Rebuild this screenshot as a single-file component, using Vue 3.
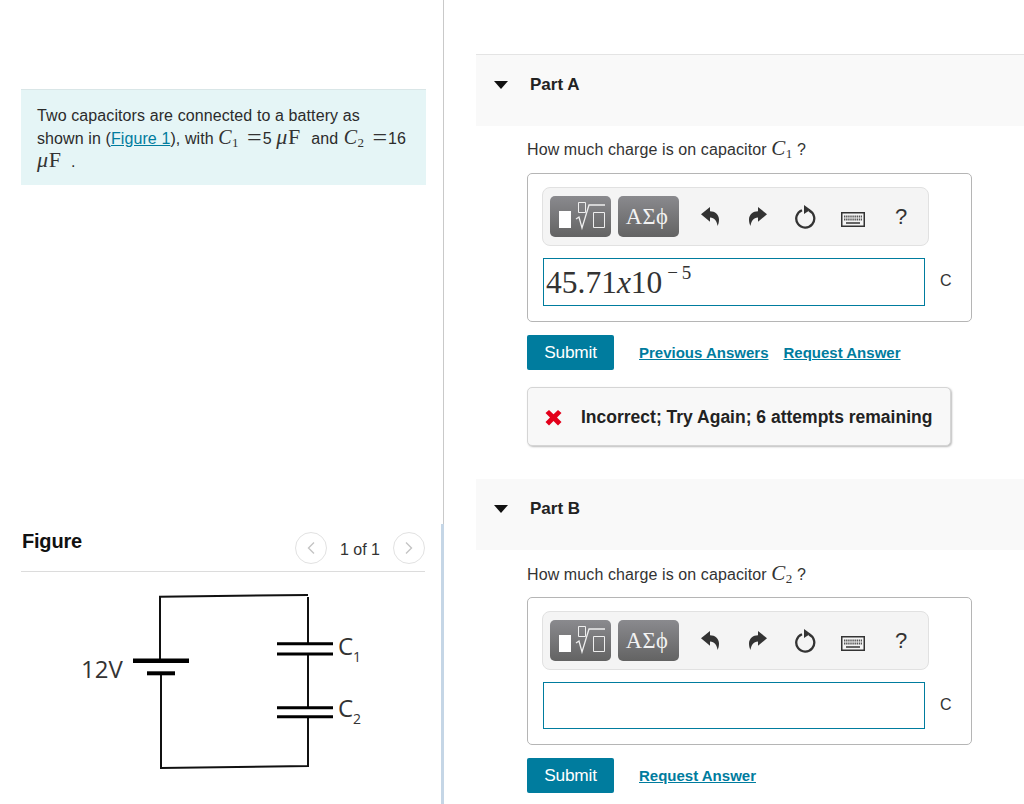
<script setup>
const parts = [
  {
    name: 'Part A',
    sub: '1',
    value: true,
    links: ['Previous Answers', 'Request Answer'],
    feedback: 'Incorrect; Try Again; 6 attempts remaining'
  },
  { name: 'Part B', sub: '2', value: false, links: ['Request Answer'], feedback: '' }
]
</script>

<template>
  <div class="page">
    <aside class="left">
      <div class="intro">
        <p>
          Two capacitors are connected to a battery as<br />
          shown in (<a class="fig-link">Figure 1</a>), with
          <span class="m"><i>C</i><sub>1</sub></span><span class="m eq">=</span>5 <span class="m mu"><i>μ</i>F</span>
          &nbsp;<span class="and">and</span> <span class="m c2"><i>C</i><sub>2</sub></span><span class="m eq">=</span>16<br />
          <span class="m mu"><i>μ</i>F</span> &nbsp;.
        </p>
      </div>
      <div class="fig-head">
        <h2>Figure</h2>
        <div class="pager">
          <span class="round">
            <svg width="10" height="14" viewBox="0 0 10 14"><path d="M8 1.500 2.500 7 8 12.500" fill="none" stroke="#c4c4c4" stroke-width="1.400" /></svg>
          </span>
          <span class="count">1 of 1</span>
          <span class="round">
            <svg width="10" height="14" viewBox="0 0 10 14"><path d="M2 1.500 7.500 7 2 12.500" fill="none" stroke="#c4c4c4" stroke-width="1.400" /></svg>
          </span>
        </div>
      </div>
      <svg class="circuit" width="404" height="190" viewBox="0 0 404 190">
        <g fill="none" stroke="#111" stroke-width="2">
          <path d="M139 72V8.700L287 7" />
          <path d="M287 9V56M287 66V120M287 129V178L140 180V85" />
        </g>
        <g fill="none" stroke="#000">
          <path d="M112 72.700H168" stroke-width="4.500" />
          <path d="M126 85.300H154" stroke-width="4" />
          <path d="M256 55.700H312M256 66H312M256 119.700H312M256 128.700H312" stroke-width="3" />
        </g>
        <text x="60" y="90" class="svg-label big">12V</text>
        <text x="317" y="67" class="svg-label big">C</text>
        <text x="332" y="74" class="svg-label small">1</text>
        <text x="317" y="129" class="svg-label big">C</text>
        <text x="332" y="136" class="svg-label small">2</text>
      </svg>
    </aside>

    <main class="right">
      <section v-for="p in parts" :key="p.name" class="part">
        <header class="part-head">
          <svg class="caret" width="14" height="8" viewBox="0 0 14 8"><path d="M0 0H14L7 8Z" fill="#111" /></svg>
          <span>{{ p.name }}</span>
        </header>
        <div class="part-body">
          <p class="question">
            How much charge is on capacitor
            <span class="m q"><i>C</i><sub>{{ p.sub }}</sub></span> ?
          </p>
          <div class="answer-box">
            <div class="toolbar">
              <button class="tool">
                <svg width="61" height="41" viewBox="0 0 61 41">
                  <rect x="9" y="15" width="12" height="17" fill="#fff" />
                  <path d="M28.500 6.500h7v10h-7z" fill="none" stroke="#eee" stroke-width="1" />
                  <path d="M26 23l3-2 3 11 7-23H55" fill="none" stroke="#eee" stroke-width="1.300" />
                  <path d="M43.500 16.500h11v15h-11z" fill="none" stroke="#eee" stroke-width="1" />
                </svg>
              </button>
              <button class="tool greek">ΑΣϕ</button>
              <span class="icons">
                <svg class="i-undo" width="18" height="20" viewBox="0 0 18 20"><path d="M0 8.300 9 1V5.200C14 5.200 18 8.500 18 13.500 18 16 17.500 18 16.500 20 16 15.500 13.500 11.500 9 11.500V15.700Z" fill="#333" /></svg>
                <svg class="i-redo" width="18" height="20" viewBox="0 0 18 20"><path d="M18 8.300 9 1V5.200C4 5.200 0 8.500 0 13.500 0 16 .5 18 1.500 20 2 15.500 4.500 11.500 9 11.500V15.700Z" fill="#333" /></svg>
                <svg class="i-reset" width="22" height="24" viewBox="0 0 22 24"><path d="M14 5.400A9 9 0 1 1 7 5.200" fill="none" stroke="#333" stroke-width="2.300" /><path d="M9 0 15.500 4.700 9 9Z" fill="#333" /></svg>
                <svg class="i-keys" width="24" height="15" viewBox="0 0 24 15">
                  <rect x=".75" y=".75" width="22.500" height="13.500" fill="#f4f4f4" stroke="#333" stroke-width="1.500" />
                  <path d="M3 4.500h18M3 7.500h18" stroke="#555" stroke-width="1.800" stroke-dasharray="1.400 .7" />
                  <path d="M5 11h14" stroke="#555" stroke-width="1.800" />
                </svg>
                <span class="help">?</span>
              </span>
            </div>
            <div class="input-row">
              <div class="math-input" :class="{ empty: !p.value }">
                <template v-if="p.value">45.71<i>x</i>10<sup><span class="minus">−</span> 5</sup></template>
              </div>
              <span class="unit">C</span>
            </div>
          </div>
          <div class="actions">
            <button class="submit">Submit</button>
            <a v-for="l in p.links" :key="l" class="action-link">{{ l }}</a>
          </div>
          <div v-if="p.feedback" class="feedback">
            <svg width="17" height="17" viewBox="0 0 17 17"><path d="M4 1 8.500 5.200 13 1 16.500 4 12 8.500 16.500 13 13 16.500 8.500 12 4 16.500 .5 13 5 8.500 .5 4Z" fill="#e3001b" /></svg>
            <span>{{ p.feedback }}</span>
          </div>
        </div>
      </section>
    </main>
  </div>
</template>

<style>
html, body { margin: 0; background: #fff; overflow: hidden; }
</style>

<style scoped>
.page {
  display: flex;
  width: 1024px;
  height: 804px;
  overflow: hidden;
  font-family: "Liberation Sans", Arial, sans-serif;
  color: #2b2b2b;
}
.left {
  box-sizing: border-box;
  width: 444px;
  padding: 89px 17px 0 21px;
  border-right: 1px solid #c9c9c9;
  position: relative;
}
.left::after {
  content: "";
  position: absolute;
  right: -1px;
  top: 524px;
  bottom: 0;
  width: 3px;
  background: #c5d6e6;
}
.intro {
  box-sizing: border-box;
  height: 96px;
  padding: 15px 10px 0 16px;
  background: #e5f5f6;
  border-top: 1px solid #d9e6e7;
}
.intro p {
  margin: 0;
  font-size: 16px;
  line-height: 21px;
  letter-spacing: 0.1px;
  white-space: nowrap;
}
.fig-link { color: #007c9e; text-decoration: underline; }
.m { font-family: "Liberation Serif", serif; font-size: 20px; color: #333; letter-spacing: .4px; }
.m sub { font-size: 13px; line-height: 0; vertical-align: -3px; }
.eq {
  margin: 0 1px 0 8px;
  font-size: 26px;
  line-height: 0;
  letter-spacing: 0;
  vertical-align: -2px;
}
.mu { font-size: 22px; letter-spacing: .8px; }
.and { margin-left: 1px; }
.c2 { margin-left: 1px; }
.fig-head {
  display: flex;
  justify-content: space-between;
  align-items: flex-start;
  margin-top: 345px;
  margin-right: 1px;
  padding-bottom: 7px;
  border-bottom: 1px solid #dcdcdc;
}
.fig-head h2 {
  margin: -1px 0 0 1px;
  font-size: 20px;
  line-height: 24px;
  font-weight: 700;
  color: #111;
  letter-spacing: -0.2px;
}
.pager {
  display: flex;
  align-items: center;
  gap: 13px;
  margin-top: 2px;
}
.round {
  box-sizing: border-box;
  display: flex;
  align-items: center;
  justify-content: center;
  width: 32px;
  height: 32px;
  border: 1px solid #e2e2e2;
  border-radius: 50%;
}
.count { margin-top: 3px; font-size: 16px; color: #333; }
.circuit { display: block; margin-top: 16px; }
.svg-label { font-family: "Open Sans", sans-serif; fill: #333; }
.big { font-size: 24px; }
.small { font-size: 14px; }
.right {
  flex: 1;
  padding: 54px 0 0 32px;
  min-width: 0;
}
.part { margin-bottom: 33px; }
.part-head {
  box-sizing: border-box;
  display: flex;
  align-items: flex-start;
  height: 72px;
  padding: 21px 0 0 18px;
  background: #f9f9f9;
  border-top: 1px solid #e4e4e4;
  font-size: 17px;
  line-height: 18px;
  font-weight: 700;
  color: #222;
}
.part + .part .part-head { height: 71px; padding-top: 20px; border-top-color: #f9f9f9; }
.part + .part .question { padding-top: 11px; }
.caret { margin: 5px 22px 0 0; }
.part-body { padding-left: 51px; }
.question {
  margin: 0;
  height: 47px;
  padding-top: 10px;
  box-sizing: border-box;
  font-size: 16px;
  line-height: 24px;
  color: #333;
  letter-spacing: 0.1px;
}
.m.q { font-size: 21px; }
.answer-box {
  box-sizing: border-box;
  width: 445px;
  padding: 13px 0 15px 14px;
  border: 1px solid #b5b5b5;
  border-radius: 5px;
}
.toolbar {
  box-sizing: border-box;
  display: flex;
  align-items: center;
  gap: 7px;
  width: 387px;
  height: 59px;
  padding: 0 7px;
  background: #f4f4f4;
  border: 1px solid #e1e1e1;
  border-radius: 8px;
}
.tool {
  box-sizing: border-box;
  width: 61px;
  height: 41px;
  border: 0;
  padding: 0;
  border-radius: 5px;
  background: linear-gradient(#8a8a8e, #636363);
  color: #f2f2f2;
  display: flex;
  align-items: center;
  justify-content: center;
}
.tool svg { display: block; }
.greek {
  font-family: "Liberation Serif", serif;
  font-size: 22.500px;
  letter-spacing: .5px;
  padding-right: 3px;
}
.icons {
  display: flex;
  align-items: center;
  flex: 1;
  padding-left: 15px;
}
.i-undo, .i-redo { margin-bottom: 2px; }
.i-redo { margin-left: 30px; }
.i-reset { margin-left: 28px; }
.i-keys { margin-left: 24px; margin-top: 6px; }
.help { margin-left: 30px; font-size: 22px; color: #333; }
.input-row {
  display: flex;
  align-items: center;
  margin-top: 12px;
  margin-left: 1px;
}
.math-input {
  box-sizing: border-box;
  width: 382px;
  height: 48px;
  padding: 2px 0 0 2px;
  border: 1px solid #007c9e;
  font-family: "Liberation Serif", serif;
  font-size: 31.500px;
  line-height: 43px;
  color: #333;
  white-space: nowrap;
}
.math-input.empty { height: 47px; }
.math-input sup {
  font-size: 19px;
  line-height: 0;
  vertical-align: 14px;
  margin-left: 5px;
}
.minus { margin-right: -1px; }
.unit { margin: 0 0 2px 15px; font-size: 16px; color: #333; }
.actions {
  display: flex;
  align-items: center;
  margin-top: 13px;
}
.submit {
  box-sizing: border-box;
  width: 87px;
  height: 35px;
  margin-right: 25px;
  border: 0;
  border-radius: 2px;
  background: #007c9e;
  color: #fff;
  font: 17.300px "Liberation Sans", Arial, sans-serif;
  letter-spacing: -0.2px;
}
.action-link {
  margin-right: 15px;
  font-size: 15px;
  font-weight: 700;
  color: #007c9e;
  text-decoration: underline;
}
.feedback {
  box-sizing: border-box;
  display: flex;
  align-items: center;
  gap: 19px;
  width: 424px;
  height: 59px;
  margin-top: 17px;
  padding: 1px 0 0 17px;
  background: #f8f8f8;
  border: 1px solid #d5d5d5;
  border-radius: 5px;
  box-shadow: 1px 1px 2px #bbb;
  font-size: 17.500px;
  font-weight: 700;
  color: #222;
  white-space: nowrap;
}
</style>
